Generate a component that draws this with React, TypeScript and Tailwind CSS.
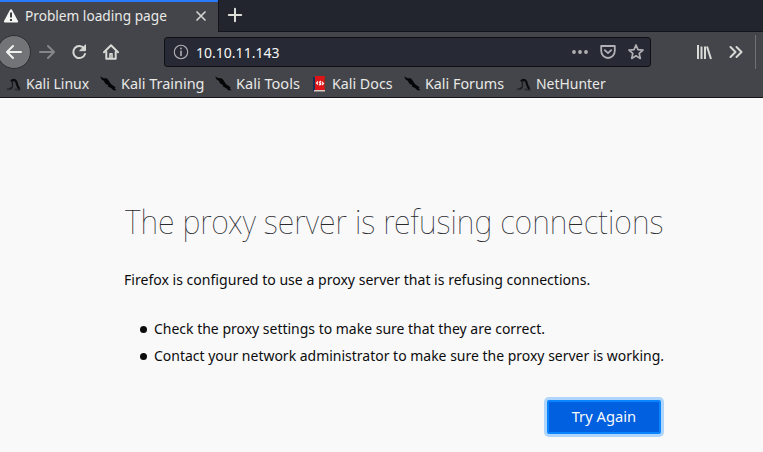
import React from "react";

type IconProps = { className?: string };

const Dragon = () => (
  <svg className="h-4 w-4 shrink-0" viewBox="0 0 16 16" fill="none">
    <path d="M1 13.5 L6 12.2 M8.5 13.3 L14.5 14" stroke="#2c2e33" strokeWidth="2" />
    <path d="M5 5.5 C6.5 3.2 9.2 3.2 10.4 6 C11.3 9 11 10.5 13.5 13" stroke="#0b0c0e" strokeWidth="2.2" />
    <path d="M7 5 C6 6.5 6.2 7.5 6.5 9 C6.8 11 6 12.2 3.5 13" stroke="#1d1e22" strokeWidth="1.4" />
  </svg>
);

const Slash = () => (
  <svg className="-ml-px h-4 w-[17px] shrink-0" viewBox="0 0 18 16">
    <path d="M0 0 L4 2 L7 2 L9 4 L11.5 8 L16.5 11.5 L15.5 12.5 L17.5 14.5 L14 14.5 L12 12.5 L8 10.5 L9 9.5 L5.5 7.5 L4 4.5 L2 3.5 Z" fill="#050607" />
  </svg>
);

const Docs = () => (
  <svg className="h-4 w-4 shrink-0" viewBox="0 0 16 16">
    <path d="M1 1h2v14h-2z" fill="#173259" />
    <path d="M3 0h10v14h-10z" fill="#dd1519" />
    <path d="M12.5 1h1v12h-1z" fill="#5b432f" />
    <path d="M2 14h11v1.5h-11z" fill="#d9c9c7" />
    <path d="M6 5.5 L4.5 7 L6 8.5 M10 6 L11.5 7.5 L10 9 M9.2 5.4 C7.2 5.4 7.2 7.2 8.2 7.2 C9.4 7.2 9 9 7 9" fill="none" stroke="#fff" strokeWidth="1.1" />
  </svg>
);

const Icon = ({ children, className = "" }: IconProps & { children: React.ReactNode }) => (
  <svg className={"h-4 w-4 shrink-0 " + className} viewBox="0 0 16 16" fill="none" stroke="currentColor" strokeWidth="2" strokeLinecap="round" strokeLinejoin="round">
    {children}
  </svg>
);

const bookmarks = [
  { label: "Kali Linux", icon: <Dragon />, width: "w-[95px]", scale: "scale-x-[0.935]" },
  { label: "Kali Training", icon: <Slash />, width: "w-[115px]", scale: "scale-x-[0.962]" },
  { label: "Kali Tools", icon: <Slash />, width: "w-[96px]", scale: "scale-x-[0.97]" },
  { label: "Kali Docs", icon: <Docs />, width: "w-[93px]", scale: "scale-x-[0.95]" },
  { label: "Kali Forums", icon: <Slash />, width: "w-[111px]", scale: "scale-x-[0.953]" },
  { label: "NetHunter", icon: <Dragon />, width: "w-[100px]", scale: "scale-x-[0.93]" },
];

const hints = [
  "Check the proxy settings to make sure that they are correct.",
  "Contact your network administrator to make sure the proxy server is working.",
];

export default function App() {
  return (
    <div className="flex h-[452px] w-[763px] flex-col overflow-hidden bg-[#f9f9fa] font-['Noto_Sans',sans-serif] text-[15px] text-[#e9e9e6]">
      <header className="shrink-0 bg-[#43454b]">
        <div className="flex h-8">
          <div className="flex w-[218px] items-center border-t-2 border-[#2a7bfb]">
            <svg className="ml-[3px] h-4 w-4 shrink-0 -translate-y-px" viewBox="0 0 16 16">
              <path d="M8 2.3 L14 13.5 H2 Z" fill="#f5f5f3" stroke="#f5f5f3" strokeWidth="2.2" strokeLinejoin="round" />
              <path d="M8 4.5v5M8 11v2" stroke="#3d3f46" strokeWidth="2" />
            </svg>
            <span className="ml-1.5 w-[168px] whitespace-nowrap leading-5"><span className="inline-block origin-left -translate-y-0.5 scale-x-[0.911]">Problem loading page</span></span>
            <Icon className="-translate-y-px text-[#d3d3d1]"><path d="M4 4l8 8M12 4l-8 8" strokeWidth="1.7" /></Icon>
          </div>
          <div className="flex flex-1 items-center border-b border-l border-[#14151a] bg-[#23252e] pl-2">
            <Icon className="-translate-y-px text-[#deded9]"><path d="M8 1.8v12.4M1.8 8h12.4" /></Icon>
          </div>
        </div>
        <nav className="flex h-10 items-center text-[#d9d9d6]">
          <div className="-ml-[3px] flex h-[34px] w-[34px] shrink-0 items-center justify-center rounded-full border border-[#2c2d32] bg-[#737478]">
            <Icon className="text-[#f0f0ee]"><path d="M15 8H1.3M7 2L1 8l6 6" /></Icon>
          </div>
          <Icon className="ml-2 text-[#85868a]"><path d="M1 8h13.7M9 2l6 6-6 6" /></Icon>
          <Icon className="ml-4"><path d="M13 4.3A6 6 0 1 0 14 10" /><path d="M14.5 1.2v5.5H9z" fill="currentColor" strokeWidth="1" /></Icon>
          <Icon className="ml-4"><path d="M1 8.2L8 1.2l7 7" /><path d="M3.3 8v6.8h9.4V8" /><path d="M7 14V9.8h2V14" strokeWidth="1.6" /></Icon>
          <div className="ml-[45px] flex h-[30px] w-[487px] shrink-0 items-center rounded-[3px] border border-[#101116] bg-[#272935] text-[#b1b1b5]">
            <Icon className="ml-2"><circle cx="8" cy="8" r="6.7" strokeWidth="1.1" /><path d="M8 7.3v4.2" strokeWidth="1.6" /><circle cx="8" cy="4.5" r=".35" strokeWidth="1.3" /></Icon>
            <span className="ml-[7px] flex-1 leading-5 text-[#f7f7f5]"><span className="inline-block origin-left scale-x-[0.935]">10.10.11.143</span></span>
            <Icon><g fill="currentColor" stroke="none"><circle cx="2" cy="8" r="1.9" /><circle cx="8" cy="8" r="1.9" /><circle cx="14" cy="8" r="1.9" /></g></Icon>
            <Icon className="ml-3"><path d="M1.2 2h13.6v4.8A6.8 7.2 0 0 1 1.2 6.8z" strokeWidth="1.8" /><path d="M4.8 6.2L8 9.1l3.2-2.9" strokeWidth="1.8" /></Icon>
            <Icon className="mr-1.5 ml-3"><path d="M8 1l2 4.6 5 .5-3.8 3.3 1.1 5L8 11.8l-4.3 2.6 1.1-5L1 6.1l5-.5z" strokeWidth="1.7" /></Icon>
          </div>
          <Icon className="ml-[45px]"><path d="M2 1v14M5.5 2.5V15M9 2.5V15M11 2.5L15 15" strokeLinecap="butt" /></Icon>
          <Icon className="ml-4"><path d="M2.5 3l5 5-5 5M8.5 3l5 5-5 5" /></Icon>
          <div className="ml-[11px] h-[34px] w-px bg-[#707176]" />
        </nav>
        <div className="flex h-[26px] border-b border-[#141519] pl-[6px]">
          {bookmarks.map(({ label, icon, width, scale }) => (
            <div key={label} className={"flex h-[23px] shrink-0 items-center gap-1 whitespace-nowrap " + width}>
              {icon}<span className={"origin-left -translate-y-px leading-5 " + scale}>{label}</span>
            </div>
          ))}
        </div>
      </header>
      <main className="ml-[124px] w-[540px] pt-[100px] text-[#0c0c0d]">
        <h1 className="ml-px w-max origin-left scale-x-[0.927] whitespace-nowrap text-[33px] font-thin leading-[48px] text-[#29292e]">The proxy server is refusing connections</h1>
        <p className="mt-5 w-max origin-left scale-x-[0.938] whitespace-nowrap leading-[27px]">Firefox is configured to use a proxy server that is refusing connections.</p>
        <ul className="mt-[22px] list-none whitespace-nowrap leading-[27px]">
          {hints.map((text) => (
            <li key={text} className="flex items-center">
              <span className="mt-px mr-[7px] ml-4 h-[7px] w-[7px] shrink-0 rounded-full bg-[#0c0c0d]" />
              <span className="shrink-0 origin-left scale-x-[0.932]">{text}</span>
            </li>
          ))}
        </ul>
        <button className="mt-[31px] mr-[3px] ml-auto flex h-[34px] w-[114px] items-center justify-center rounded-[2px] border-2 border-[#0a84ff] bg-[#0060df] pb-0.5 text-[#f9f9fa] ring-3 ring-[#afd5fc]"><span className="scale-x-[0.98]">Try Again</span></button>
      </main>
    </div>
  );
}
